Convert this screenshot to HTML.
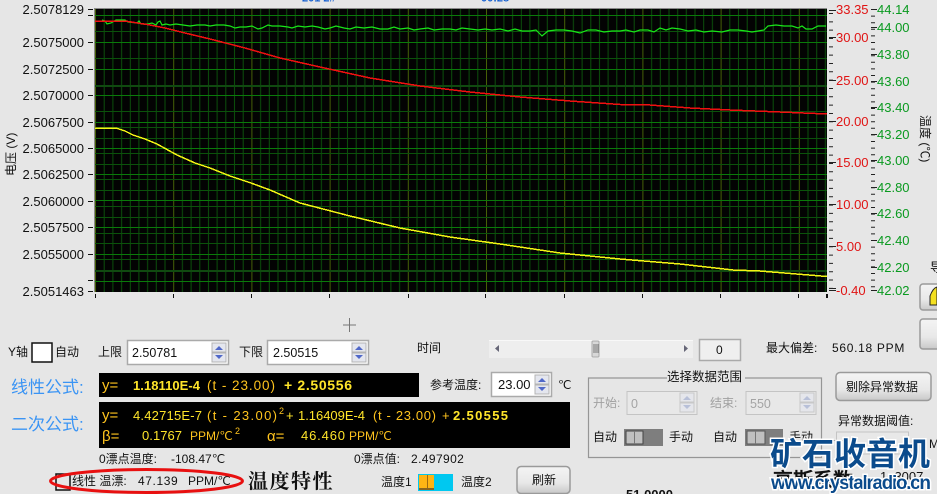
<!DOCTYPE html>
<html><head><meta charset="utf-8"><style>
html,body{margin:0;padding:0;background:#e6e6e6;overflow:hidden}
svg{display:block}
text{font-family:"Liberation Sans","WenQuanYi Zen Hei",sans-serif;font-size:12px;fill:#111}
.l{font-size:13px;fill:#111}
.r{font-size:13px;fill:#e01414}
.g{font-size:13px;fill:#0a9a20}
.c{font-family:"WenQuanYi Zen Hei","Liberation Sans",sans-serif}
.b{font-size:17px;fill:#3a94f4;font-family:"WenQuanYi Zen Hei",sans-serif}
.o{font-size:13px;fill:#ffc41e}
.y{font-size:13px;fill:#ffe52a}
.yb{font-size:13px;fill:#ffe52a;font-weight:bold}
.d{fill:#a0a0a0}
.fld{fill:#fff;stroke:#aaa;stroke-width:1.5}
.fd{fill:#e8e8e8;stroke:#c4c4c4;stroke-width:1}
.sp{fill:#e4e6ee;stroke:#b4b4b4}
.ar{fill:#5068c8}
.ard{fill:#b8c0d8}
.btn{fill:url(#bg);stroke:#9a9a9a;stroke-width:1.5}
.wm{font-family:"WenQuanYi Zen Hei","Noto Sans CJK SC",sans-serif;font-weight:bold;fill:#0b4b8c;stroke:#fff;stroke-width:3;paint-order:stroke}
</style></head><body>
<svg xmlns="http://www.w3.org/2000/svg" width="937" height="494" viewBox="0 0 937 494">
<defs>
<pattern id="v" x="95" y="0" width="78.2" height="400" patternUnits="userSpaceOnUse">
<rect x="0" y="0" width="1" height="400" fill="#466006"/>
<rect x="8.7" width="1" height="400" fill="#0b500b"/><rect x="17.4" width="1" height="400" fill="#0b500b"/>
<rect x="26.1" width="1" height="400" fill="#0b500b"/><rect x="34.8" width="1" height="400" fill="#0b500b"/>
<rect x="43.4" width="1" height="400" fill="#0b500b"/><rect x="52.1" width="1" height="400" fill="#0b500b"/>
<rect x="60.8" width="1" height="400" fill="#0b500b"/><rect x="69.5" width="1" height="400" fill="#0b500b"/>
</pattern>
<linearGradient id="bg" x1="0" y1="0" x2="0" y2="1"><stop offset="0" stop-color="#f4f4f4"/><stop offset=".6" stop-color="#e8e8e8"/><stop offset="1" stop-color="#c8c8c8"/></linearGradient>
</defs>
<rect width="937" height="494" fill="#e6e6e6"/>
<text x="302" y="1.500" style="font-size:11px;font-weight:bold;fill:#1560d0">201 2#</text>
<text x="481" y="1.500" style="font-size:11px;font-weight:bold;fill:#1560d0">00:28</text>

<!-- plot -->
<rect x="94" y="8" width="733" height="284" fill="#030303"/>
<rect x="94" y="8" width="733" height="1" fill="#8a8a8a"/>
<rect x="94" y="8" width="1" height="284" fill="#8a8a8a"/>
<rect x="95" y="9" width="732" height="283" fill="url(#v)"/>
<g fill="#0b520b" shape-rendering="crispEdges">
<rect x="95" y="31" width="732" height="1"/><rect x="95" y="58" width="732" height="1"/><rect x="95" y="111" width="732" height="1"/><rect x="95" y="127" width="732" height="1"/><rect x="95" y="138" width="732" height="1"/><rect x="95" y="153" width="732" height="1"/><rect x="95" y="164" width="732" height="1"/><rect x="95" y="179" width="732" height="1"/><rect x="95" y="190" width="732" height="1"/><rect x="95" y="206" width="732" height="1"/><rect x="95" y="217" width="732" height="1"/><rect x="95" y="233" width="732" height="1"/><rect x="95" y="243" width="732" height="1"/><rect x="95" y="259" width="732" height="1"/>
<rect x="95" y="85" width="732" height="2" fill="#104a10"/><rect x="95" y="270" width="732" height="2" fill="#104a10"/>
</g>
<g fill="#0a7a0a" shape-rendering="crispEdges">
<rect x="95" y="15" width="732" height="1"/><rect x="95" y="42" width="732" height="1"/><rect x="95" y="69" width="732" height="1"/><rect x="95" y="95" width="732" height="1"/><rect x="95" y="122" width="732" height="1"/><rect x="95" y="148" width="732" height="1"/><rect x="95" y="174" width="732" height="1"/><rect x="95" y="200" width="732" height="1"/><rect x="95" y="227" width="732" height="1"/><rect x="95" y="254" width="732" height="1"/><rect x="95" y="281" width="732" height="1"/>
</g>
<polyline fill="none" stroke="#19e619" stroke-width="1.2" points="102,20 105,21 107,24 111,23 116,20 125,20 128,22 137,23 139,21 141,24 148,24 152,23 156,25 158,22 160,21 162,25 166,24 170,25 176,24 183,25 190,26 197,25 205,25 210,26 216,25 224,25 230,26 235,28 240,27 246,27 252,26 258,29 262,28 268,25 272,26 280,26 288,27 292,28 298,26 305,27 312,26 318,27 325,29 330,28 336,26 344,28 350,29 356,27 364,28 372,27 380,29 388,29 394,27 400,29 408,28 414,30 420,29 428,28 434,30 442,29 450,29 456,30 462,28 470,29 478,30 485,29 492,30 500,29 508,31 515,29 522,31 530,31 536,30 542,36 548,31 556,30 564,30 572,31 580,33 588,30 596,30 604,32 612,31 620,31 626,30 634,32 640,30 648,30 654,32 660,28 666,30 672,28 680,29 688,31 696,30 704,32 712,31 722,32 730,30 738,30 746,31 752,32 758,31 764,30 768,26 776,25 784,26 792,26 798,28 802,26 806,29 812,29 818,26 826,26"/>
<polyline fill="none" stroke="#f01010" stroke-width="1.5" shape-rendering="crispEdges" points="95,21 125,21 150,25 165,28 185,33 210,39 245,48 280,58 320,67 370,78 420,86 470,92 520,97 570,101 620,104.500 650,105 690,108 730,110 780,112 827,114"/>
<polyline fill="none" stroke="#f4f414" stroke-width="1.5" shape-rendering="crispEdges" points="95,128 116,128 125,131 133,135 145,139 157,144 177,155 195,163 210,168 230,176 251,183 270,190 300,203 350,216 400,228 450,237 500,244 560,253 620,259 680,264 733,270 760,271 827,276.500"/>

<!-- left axis -->
<g fill="#111" shape-rendering="crispEdges">
<rect x="88" y="9" width="5" height="1"/><rect x="88" y="15" width="5" height="1"/><rect x="88" y="42" width="5" height="1"/><rect x="88" y="69" width="5" height="1"/><rect x="88" y="95" width="5" height="1"/><rect x="88" y="122" width="5" height="1"/><rect x="88" y="148" width="5" height="1"/><rect x="88" y="174" width="5" height="1"/><rect x="88" y="201" width="5" height="1"/><rect x="88" y="227" width="5" height="1"/><rect x="88" y="254" width="5" height="1"/><rect x="88" y="280" width="5" height="1"/><rect x="88" y="291" width="5" height="1"/>
<rect x="95" y="294" width="1" height="4"/><rect x="173" y="294" width="1" height="4"/><rect x="251" y="294" width="1" height="4"/><rect x="329" y="294" width="1" height="4"/><rect x="408" y="294" width="1" height="4"/><rect x="485" y="294" width="1" height="4"/><rect x="564" y="294" width="1" height="4"/><rect x="642" y="294" width="1" height="4"/><rect x="720" y="294" width="1" height="4"/><rect x="798" y="294" width="1" height="4"/><rect x="826" y="294" width="2" height="4"/>
</g>
<g text-anchor="end">
<text class="l" x="84" y="14">2.5078129</text><text class="l" x="84" y="47">2.5075000</text><text class="l" x="84" y="74">2.5072500</text><text class="l" x="84" y="100">2.5070000</text><text class="l" x="84" y="127">2.5067500</text><text class="l" x="84" y="153">2.5065000</text><text class="l" x="84" y="179">2.5062500</text><text class="l" x="84" y="206">2.5060000</text><text class="l" x="84" y="232">2.5057500</text><text class="l" x="84" y="259">2.5055000</text><text class="l" x="84" y="296">2.5051463</text>
</g>
<text class="c" transform="translate(15,176) rotate(-90)" style="font-size:12px">电压 (V)</text>

<!-- right axes ticks -->
<g stroke="#222" fill="none">
<line x1="831" y1="9" x2="831" y2="292" stroke-width="4" stroke-dasharray="1 7.33" stroke-dashoffset="-4"/>
<line x1="873" y1="9" x2="873" y2="292" stroke-width="4" stroke-dasharray="1 5.6"/>
</g>
<g fill="#222" shape-rendering="crispEdges">
<rect x="829" y="37" width="7" height="1"/><rect x="829" y="80" width="7" height="1"/><rect x="829" y="121" width="7" height="1"/><rect x="829" y="162" width="7" height="1"/><rect x="829" y="204" width="7" height="1"/><rect x="829" y="246" width="7" height="1"/><rect x="829" y="290" width="7" height="1"/><rect x="829" y="288" width="7" height="1"/><rect x="829" y="10" width="7" height="1"/>
<rect x="871" y="9" width="6" height="1"/><rect x="871" y="27" width="6" height="1"/><rect x="871" y="54" width="6" height="1"/><rect x="871" y="81" width="6" height="1"/><rect x="871" y="107" width="6" height="1"/><rect x="871" y="134" width="6" height="1"/><rect x="871" y="160" width="6" height="1"/><rect x="871" y="187" width="6" height="1"/><rect x="871" y="213" width="6" height="1"/><rect x="871" y="240" width="6" height="1"/><rect x="871" y="267" width="6" height="1"/><rect x="871" y="290" width="6" height="1"/>
</g>
<text class="r" x="836" y="14">33.35</text><text class="r" x="836" y="42">30.00</text><text class="r" x="836" y="85">25.00</text><text class="r" x="836" y="126">20.00</text><text class="r" x="836" y="167">15.00</text><text class="r" x="836" y="209">10.00</text><text class="r" x="836" y="251">5.00</text><text class="r" x="836" y="295">-0.40</text>
<text class="g" x="877" y="14">44.14</text><text class="g" x="877" y="32">44.00</text><text class="g" x="877" y="59">43.80</text><text class="g" x="877" y="86">43.60</text><text class="g" x="877" y="112">43.40</text><text class="g" x="877" y="139">43.20</text><text class="g" x="877" y="165">43.00</text><text class="g" x="877" y="192">42.80</text><text class="g" x="877" y="218">42.60</text><text class="g" x="877" y="245">42.40</text><text class="g" x="877" y="272">42.20</text><text class="g" x="877" y="295">42.02</text>
<text class="c" transform="translate(921,115) rotate(90)" style="font-size:12px">温度 (℃)</text>
<text class="c" x="930" y="272" style="font-size:13px">导</text>
<rect x="920" y="284" width="24" height="26" rx="3" class="btn"/>
<path d="M930 305 L930 296 Q933 288 937 287 L937 305 Z" fill="#f4e020" stroke="#222"/>
<rect x="920" y="319" width="24" height="30" rx="3" class="btn"/>

<!-- plus -->
<path d="M349.500 318V332M343 325H356" stroke="#777" stroke-width="1" fill="none"/>

<!-- Y axis row -->
<text class="c" x="8" y="356">Y轴</text>
<rect x="32" y="343" width="20" height="19" fill="#fff" stroke="#111" stroke-width="1.500"/>
<text class="c" x="55" y="356">自动</text>
<text class="c" x="98" y="356">上限</text>
<rect x="127.500" y="340.500" width="101" height="24" class="fld"/>
<text x="132" y="357" style="font-size:12.500px">2.50781</text>
<rect x="212" y="343" width="14" height="9" class="sp"/><rect x="212" y="353" width="14" height="9" class="sp"/>
<path d="M215 350L219 346L223 350Z M215 355L219 359L223 355Z" class="ar"/>
<text class="c" x="239" y="356">下限</text>
<rect x="267.500" y="340.500" width="101" height="24" class="fld"/>
<text x="273" y="357" style="font-size:12.500px">2.50515</text>
<rect x="352" y="343" width="14" height="9" class="sp"/><rect x="352" y="353" width="14" height="9" class="sp"/>
<path d="M355 350L359 346L363 350Z M355 355L359 359L363 355Z" class="ar"/>
<text class="c" x="417" y="352">时间</text>
<rect x="489" y="340" width="204" height="18" fill="#eeeeee"/>
<rect x="489" y="340" width="204" height="1" fill="#f8f8f8"/>
<rect x="592" y="341" width="7" height="16" rx="1" fill="#d8d8d8" stroke="#aaa"/>
<path d="M594 344V353M596 344V353M598 344V353" stroke="#777" fill="none"/>
<path d="M499 345L495 348.500L499 352Z M684 345L688 348.500L684 352Z" fill="#667"/>
<rect x="699.500" y="339.500" width="41" height="21" fill="#efefef" stroke="#aaa" stroke-width="1.500"/>
<text x="716" y="354" style="font-size:12px">0</text>
<text class="c" x="766" y="352" style="font-size:12px">最大偏差:</text>
<text x="832" y="352" style="font-size:12px;letter-spacing:.7px">560.18 PPM</text>

<!-- formula 1 -->
<text class="b" x="11" y="393">线性公式:</text>
<rect x="99" y="373" width="320" height="24" fill="#000"/>
<text class="o" x="102" y="390" style="font-size:15px">y=</text>
<text class="yb" x="133" y="390" textLength="67">1.18110E-4</text>
<text class="o" x="207" y="390" textLength="68" style="font-size:13.500px">(t - 23.00)</text>
<text class="yb" x="284" y="390" textLength="68" style="font-size:14px">+ 2.50556</text>
<text class="c" x="430" y="389">参考温度:</text>
<rect x="491.500" y="372.500" width="60" height="24" class="fld"/>
<text x="498" y="389" style="font-size:13px">23.00</text>
<rect x="535" y="375" width="14" height="9" class="sp"/><rect x="535" y="385" width="14" height="9" class="sp"/>
<path d="M538 382L542 378L546 382Z M538 387L542 391L546 387Z" class="ar"/>
<text x="558" y="389" style="font-size:12px;font-family:'WenQuanYi Zen Hei',sans-serif">℃</text>

<!-- formula 2 -->
<text class="b" x="11" y="430">二次公式:</text>
<rect x="99" y="402" width="471" height="46" fill="#000"/>
<text class="o" x="102" y="420" style="font-size:15px">y=</text>
<text class="y" x="133" y="420" textLength="69">4.42715E-7</text>
<text class="o" x="207" y="420" textLength="70">(t - 23.00)</text>
<text class="o" x="279" y="414" style="font-size:9px">2</text>
<text class="y" x="286" y="420">+</text>
<text class="y" x="298" y="420" textLength="67">1.16409E-4</text>
<text class="o" x="373" y="420" textLength="63">(t - 23.00)</text>
<text class="o" x="442" y="420">+</text>
<text class="yb" x="453" y="420" textLength="55">2.50555</text>
<text class="o" x="102" y="441" style="font-size:15px">β=</text>
<text class="y" x="142" y="440" textLength="40">0.1767</text>
<text class="o" x="190" y="440" style="font-size:12px">PPM/℃</text>
<text class="o" x="235" y="434" style="font-size:9px">2</text>
<text class="o" x="267" y="441" style="font-size:15px">α=</text>
<text class="y" x="301" y="440" textLength="44">46.460</text>
<text class="o" x="349" y="440" style="font-size:12px">PPM/℃</text>

<!-- group -->
<path d="M667 378H588.500V457.500H821.500V378H745" fill="none" stroke="#969696" stroke-width="1.200"/>
<text class="c" x="667" y="381" style="font-size:12.500px">选择数据范围</text>
<text class="c d" x="593" y="407">开始:</text>
<rect x="627" y="391.500" width="70" height="23" class="fd"/>
<text x="631" y="408" style="font-size:12.500px;fill:#a4a4a4">0</text>
<rect x="680" y="393" width="14" height="9" class="sp" opacity=".6"/><rect x="680" y="403" width="14" height="9" class="sp" opacity=".6"/>
<path d="M683 400L687 396L691 400Z M683 405L687 409L691 405Z" class="ard"/>
<text class="c d" x="710" y="407">结束:</text>
<rect x="746" y="391.500" width="70" height="23" class="fd"/>
<text x="750" y="408" style="font-size:12.500px;fill:#a4a4a4">550</text>
<rect x="800" y="393" width="14" height="9" class="sp" opacity=".6"/><rect x="800" y="403" width="14" height="9" class="sp" opacity=".6"/>
<path d="M803 400L807 396L811 400Z M803 405L807 409L811 405Z" class="ard"/>
<text class="c" x="593" y="441">自动</text>
<rect x="624" y="429" width="39" height="17" fill="#7e7e7e"/><rect x="626" y="431" width="17" height="13" fill="#c0c0c0" stroke="#444"/><rect x="634" y="431" width="1" height="13" fill="#777"/>
<text class="c" x="669" y="441">手动</text>
<text class="c" x="713" y="441">自动</text>
<rect x="745" y="429" width="38" height="17" fill="#7e7e7e"/><rect x="747" y="431" width="18" height="13" fill="#c0c0c0" stroke="#555"/><rect x="755" y="431" width="1" height="13" fill="#777"/>
<text class="c" x="789" y="441">手动</text>

<!-- right controls -->
<rect x="836" y="372.500" width="95" height="28" rx="4" class="btn"/>
<text class="c" x="846" y="391">剔除异常数据</text>
<text class="c" x="838" y="425">异常数据阈值:</text>
<rect x="836.500" y="432" width="72" height="22" class="fd"/>
<text x="929" y="448" style="font-size:12px">M</text>
<rect x="816" y="440" width="30" height="1" fill="#aaa"/>
<text class="c" x="773" y="487" style="font-size:20px;font-weight:bold;fill:#111">高斯系数</text>
<text x="880" y="481" style="font-size:13px">1: 3007</text>

<!-- watermark -->
<text class="wm" x="770" y="465" textLength="160" style="font-size:32px">矿石收音机</text>
<text x="771" y="489" textLength="160" style="font-family:'Liberation Sans',sans-serif;font-weight:bold;font-size:19px;fill:#0b4b8c;stroke:#fff;stroke-width:3;paint-order:stroke">www.crystalradio.cn</text>

<!-- bottom -->
<text class="c" x="99" y="463">0漂点温度:</text>
<text x="171" y="463" style="font-size:12px">-108.47℃</text>
<text class="c" x="354" y="463">0漂点值:</text>
<text x="411" y="463" style="font-size:12px;letter-spacing:.4px">2.497902</text>
<rect x="56" y="474" width="14" height="16" fill="#e6e6e6" stroke="#111" stroke-width="1.500"/>
<text class="c" x="72" y="485">线性 温漂:</text>
<text x="138" y="485" style="font-size:12px;letter-spacing:.6px">47.139</text>
<text x="188" y="485" style="font-size:12px">PPM/℃</text>
<ellipse cx="146.500" cy="481" rx="96" ry="11.500" fill="none" stroke="#e81010" stroke-width="3"/>
<text x="248" y="488" style="font-family:'Noto Serif CJK SC',serif;font-weight:bold;font-size:20px;fill:#111;letter-spacing:1.500px">温度特性</text>
<text class="c" x="381" y="486">温度1</text>
<rect x="418" y="474" width="35" height="17" fill="#00c8f0"/>
<rect x="419" y="475" width="15" height="15" fill="#ffb414"/><rect x="427" y="475" width="1" height="15" fill="#a06a10"/><rect x="419" y="488" width="15" height="2" fill="#8a6420"/>
<text class="c" x="461" y="486">温度2</text>
<rect x="517" y="466.500" width="53" height="27" rx="4" class="btn"/>
<text class="c" x="532" y="484">刷新</text>
<text x="626" y="499" style="font-size:13px;font-weight:bold">51.0000</text>
</svg>
</body></html>
